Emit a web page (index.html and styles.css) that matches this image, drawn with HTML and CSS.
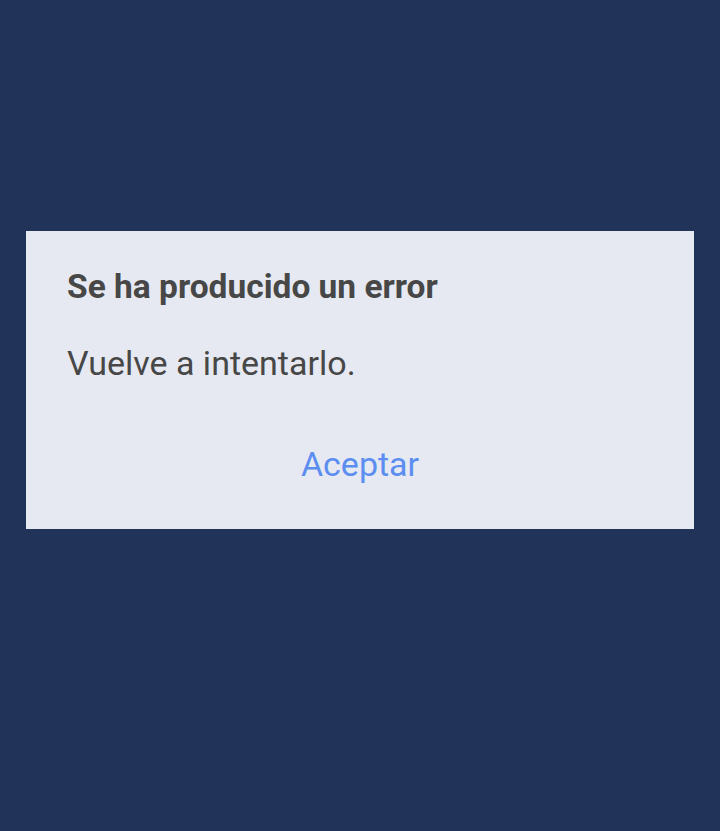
FILE: index.html
```html
<!DOCTYPE html>
<html lang="es">
<head>
<meta charset="UTF-8">
<title>Error</title>
<link rel="stylesheet" href="styles.css">
</head>
<body>
<div class="overlay">
    <div class="dialog">
        <h2 class="dialog-title">Se ha producido un error</h2>
        <p class="dialog-text">Vuelve a intentarlo.</p>
        <div class="dialog-actions">
            <button class="button">Aceptar</button>
        </div>
    </div>
</div>
</body>
</html>
```
FILE: styles.css
```css
body {
    margin: 0;
    font-family: Roboto, "Noto Sans", Arial, sans-serif;
    background-color: #22335a;
    height: 831px;
}

.overlay {
    padding: 231px 26px 0 26px;
}

.dialog {
    background-color: #e6e9f1;
    height: 298px;
    box-sizing: border-box;
    padding: 36px 41px 0 41px;
}

.dialog-title {
    margin: 0;
    font-size: 33.5px;
    font-weight: 700;
    line-height: 40px;
    color: #474747;
}

.dialog-text {
    margin: 36px 0 0 0;
    font-size: 34px;
    line-height: 40px;
    color: #474747;
}

.dialog-actions {
    margin-top: 61px;
    text-align: center;
}

.button {
    border: none;
    background: none;
    padding: 0;
    font-family: inherit;
    font-size: 34px;
    line-height: 40px;
    color: #5b8ef0;
    cursor: pointer;
}
```
